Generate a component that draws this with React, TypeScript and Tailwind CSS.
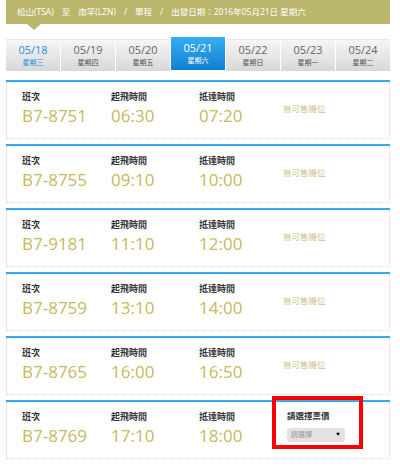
const days = [
  { date: "05/18", day: "星期三", first: true },
  { date: "05/19", day: "星期四" },
  { date: "05/20", day: "星期五" },
  { date: "05/21", day: "星期六", active: true },
  { date: "05/22", day: "星期日" },
  { date: "05/23", day: "星期一" },
  { date: "05/24", day: "星期二" },
];

const flights = [
  { no: "B7-8751", dep: "06:30", arr: "07:20" },
  { no: "B7-8755", dep: "09:10", arr: "10:00" },
  { no: "B7-9181", dep: "11:10", arr: "12:00" },
  { no: "B7-8759", dep: "13:10", arr: "14:00" },
  { no: "B7-8765", dep: "16:00", arr: "16:50" },
  { no: "B7-8769", dep: "17:10", arr: "18:00", select: true },
];

const font = { fontFamily: '"Open Sans", "Noto Sans CJK TC", sans-serif' };

export default function App() {
  return (
    <div className="w-[400px] h-[475px] bg-white overflow-hidden pl-[6px] pr-[10px]" style={font}>
      {/* Header */}
      <div className="relative h-[24px] bg-[#bab76d] flex items-center pl-[11px] text-white text-[8.5px] gap-[8px]">
        <span>松山(TSA)</span>
        <span>至</span>
        <span>南竿(LZN)</span>
        <span>/</span>
        <span>單程</span>
        <span>/</span>
        <span>出發日期：2016年05月21日 星期六</span>
        <div className="absolute left-[21px] top-[24px] w-0 h-0 border-l-[7px] border-r-[7px] border-t-[6px] border-l-transparent border-r-transparent border-t-[#bab76d]" />
      </div>

      {/* Date tabs */}
      <div className="mt-[15px] flex h-[32px] items-start">
        {days.map((d) =>
          d.active ? (
            <div
              key={d.date}
              className="w-[55px] h-[33px] -mt-[2px] flex flex-col items-center justify-center bg-gradient-to-b from-[#36aef2] to-[#0f7fd0] text-white border-r border-white"
            >
              <span className="text-[11px] leading-[14px]">{d.date}</span>
              <span className="text-[7px] leading-[10px] mt-[1px]">{d.day}</span>
            </div>
          ) : (
            <div
              key={d.date}
              className="flex-1 h-[32px] flex flex-col items-center justify-center bg-gradient-to-b from-[#f6f6f6] to-[#d8d8d8] border-r border-white border-t border-t-[#e8e8e8] last:border-r-0"
            >
              <span className={`text-[11px] leading-[14px] ${d.first ? "text-[#2a8fd8]" : "text-[#666]"}`}>{d.date}</span>
              <span className={`text-[7px] leading-[10px] mt-[1px] ${d.first ? "text-[#2a8fd8]" : "text-[#555]"}`}>{d.day}</span>
            </div>
          )
        )}
      </div>

      {/* Flight cards */}
      <div className="mt-[9px] flex flex-col gap-[5px]">
        {flights.map((f) => (
          <div key={f.no} className="h-[59px] bg-white flex flex-col">
            <div className="h-[2px] bg-[#35a9ef]" />
            <div className="flex-1 border-x border-b border-dotted border-[#d8d8d8] flex pl-[15px] pt-[9px]">
              <div className="w-[89px]">
                <div className="text-[9px] leading-[12px] font-bold text-[#333]">班次</div>
                <div className="text-[17px] leading-[22px] text-[#c6b95e] mt-[2px]">{f.no}</div>
              </div>
              <div className="w-[88px]">
                <div className="text-[9px] leading-[12px] font-bold text-[#333]">起飛時間</div>
                <div className="text-[17px] leading-[22px] text-[#c6b95e] mt-[2px]">{f.dep}</div>
              </div>
              <div className="w-[84px]">
                <div className="text-[9px] leading-[12px] font-bold text-[#333]">抵達時間</div>
                <div className="text-[17px] leading-[22px] text-[#c6b95e] mt-[2px]">{f.arr}</div>
              </div>
              {f.select ? (
                <div className="relative pl-[4px]">
                  <div className="text-[8.5px] leading-[12px] font-semibold text-[#333] mt-[-1px]">請選擇票價</div>
                  <div className="mt-[6px] w-[58px] h-[14px] rounded-[3px] bg-[#e2e2e2] flex items-center justify-between pl-[4px] pr-[5px]">
                    <span className="text-[7px] text-[#999]">請選擇</span>
                    <span className="text-[4px] text-black">▼</span>
                  </div>
                  <div className="absolute left-[-11px] top-[-15px] w-[91px] h-[53px] border-[4px] border-[#ff0000]" />
                </div>
              ) : (
                <div className="text-[8.5px] text-[#c9c27f] pt-[12px]">無可售機位</div>
              )}
            </div>
          </div>
        ))}
      </div>
    </div>
  );
}
